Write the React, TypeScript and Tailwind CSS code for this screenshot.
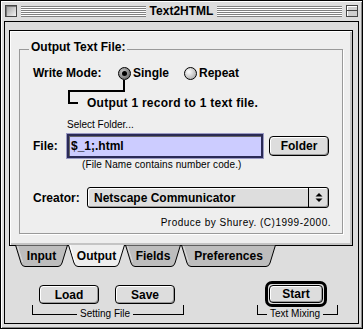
import React from 'react'

function Radio({ on }: { on?: boolean }) {
  return (
    <span
      className={
        on
          ? 'w-[13px] h-[13px] rounded-full border border-black flex items-center justify-center bg-[radial-gradient(circle_at_35%_35%,#c8c8c8,#555)]'
          : 'w-[13px] h-[13px] rounded-full border border-black flex items-center justify-center bg-[radial-gradient(circle_at_35%_35%,#ffffff,#9a9a9a)]'
      }
    >
      {on && <span className="w-[5px] h-[5px] rounded-full bg-black" />}
    </span>
  )
}

function Tab({ label, width, active }: { label: string; width: number; active?: boolean }) {
  const h = 23
  const sides = `M0.5 0 L6 ${h - 5} Q7 ${h - 1.5} 10 ${h - 1.5} L${width - 10} ${h - 1.5} Q${width - 7} ${h - 1.5} ${width - 6} ${h - 5} L${width - 0.5} 0`
  return (
    <div className="relative h-[23px] flex justify-center pt-[4px]" style={{ width }}>
      <svg className="absolute inset-0" width={width} height={h}>
        {active ? (
          <>
            <path d={sides + ' Z'} fill="#eeeeee" />
            <path d={sides} fill="none" stroke="#000" />
            <path d={`M2 0 L7 ${h - 6}`} stroke="#fff" />
          </>
        ) : (
          <>
            <path d={sides + ' Z'} fill="#bdbdbd" stroke="#000" />
            <path d={`M2.5 1 L7.5 ${h - 6}`} stroke="#dcdcdc" />
          </>
        )}
      </svg>
      <span className="relative font-bold text-[12px] leading-[14px]">{label}</span>
    </div>
  )
}

const btn =
  'rounded-[4px] border border-black bg-[#dddddd] shadow-[inset_1px_1px_0_#fff,inset_-1px_-1px_0_#999] flex items-center justify-center font-bold text-[12px] leading-[14px]'

export default function App() {
  return (
    <div className="w-[363px] h-[329px] border border-black bg-[#dddddd] flex flex-col font-['Liberation_Sans',Arial,sans-serif] text-black shadow-[inset_1px_1px_0_#fff,inset_-1px_-1px_0_#888]">
      {/* title bar */}
      <div className="h-[20px] flex items-center pl-[4px] pr-[4px]">
        <div className="w-[12px] h-[12px] border border-[#444] bg-[linear-gradient(135deg,#9a9a9a,#f4f4f4)] shadow-[inset_1px_1px_0_#777]" />
        <div className="ml-[4px] flex-1 h-[11px] bg-[repeating-linear-gradient(to_bottom,#808080_0px,#808080_1px,#ffffff_1px,#ffffff_2px)]" />
        <span className="px-[4px] font-bold text-[12px] leading-[14px]">Text2HTML</span>
        <div className="mr-[4px] flex-1 h-[11px] bg-[repeating-linear-gradient(to_bottom,#808080_0px,#808080_1px,#ffffff_1px,#ffffff_2px)]" />
        <div className="w-[12px] h-[12px] border border-[#444] bg-[#cfcfcf] shadow-[inset_1px_1px_0_#fff] flex flex-col">
          <div className="h-[5px] border-b border-[#444]" />
        </div>
      </div>

      {/* frame */}
      <div className="flex-1 px-[3px] pb-[4px] flex">
        <div className="flex-1 border border-black bg-[#dddddd] flex flex-col">
          {/* tab panel */}
          <div className="mt-[8px] ml-[4px] w-[344px] h-[216px] border border-black bg-[#eeeeee] shadow-[inset_1px_1px_0_#fff,inset_-2px_-2px_0_#c4c4c4] pt-[18px] px-[9px]">
            <div className="relative h-[185px] border border-[#999] shadow-[1px_1px_0_#fff] flex flex-col">
              <span className="absolute left-[9px] -top-[10px] px-[2px] bg-[#eeeeee] font-bold text-[12px] leading-[14px]">
                Output Text File:
              </span>

              <div className="mt-[16px] h-[14px] flex items-center pl-[13px]">
                <span className="w-[85px] font-bold text-[12px] leading-[14px]">Write Mode:</span>
                <div className="w-[66px] flex items-center gap-[2px]">
                  <Radio on />
                  <span className="font-bold text-[12px] leading-[14px]">Single</span>
                </div>
                <div className="flex items-center gap-[2px]">
                  <Radio />
                  <span className="font-bold text-[12px] leading-[14px]">Repeat</span>
                </div>
              </div>

              <div className="h-[12px] flex">
                <div className="ml-[48px] w-[57px] h-[12px] border-r-2 border-b-2 border-black" />
              </div>
              <div className="flex items-start">
                <div className="ml-[48px] w-[10px] h-[12px] border-l-2 border-b-2 border-black" />
                <span className="ml-[9px] mt-[4px] font-bold text-[12px] leading-[14px] tracking-[0.25px]">
                  Output 1 record to 1 text file.
                </span>
              </div>

              <span className="mt-[9px] ml-[47px] text-[10px] leading-[12px]">Select Folder...</span>

              <div className="mt-[3px] h-[24px] flex items-center pl-[13px]">
                <span className="w-[34px] font-bold text-[12px] leading-[14px]">File:</span>
                <div className="w-[196px] h-[24px] border-2 border-[#2a2a55] bg-[#ccccff] shadow-[inset_1px_1px_0_#666,0_0_0_1px_#9a9ac4] flex items-center pl-[2px]">
                  <span className="font-bold text-[12px] leading-[14px]">$_1;.html</span>
                </div>
                <div className={'ml-[6px] w-[60px] h-[20px] ' + btn}>Folder</div>
              </div>

              <span className="mt-[1px] ml-[62px] text-[10px] leading-[12px] tracking-[0.1px]">(File Name contains number code.)</span>

              <div className="mt-[16px] h-[21px] flex items-center pl-[13px]">
                <span className="w-[54px] font-bold text-[12px] leading-[14px]">Creator:</span>
                <div className="w-[242px] h-[21px] border border-black rounded-[3px] bg-[#dddddd] shadow-[inset_1px_1px_0_#fff,inset_-1px_-1px_0_#999] flex items-center">
                  <span className="flex-1 pl-[6px] font-bold text-[12px] leading-[14px]">Netscape Communicator</span>
                  <div className="w-[20px] h-full border-l border-black flex items-center justify-center">
                    <svg width="8" height="11" viewBox="0 0 8 11">
                      <polygon points="0.5,4.5 4,1 7.5,4.5" fill="#000" />
                      <polygon points="0.5,6.5 4,10 7.5,6.5" fill="#000" />
                    </svg>
                  </div>
                </div>
              </div>

              <span className="mt-[9px] pr-[11px] text-right text-[10px] leading-[12px] tracking-[0.5px]">
                Produce by Shurey. (C)1999-2000.
              </span>
            </div>
          </div>

          {/* tabs */}
          <div className="relative z-10 -mt-[1px] ml-[10px] h-[23px] flex">
            <Tab label="Input" width={53} />
            <Tab label="Output" width={57} active />
            <Tab label="Fields" width={56} />
            <Tab label="Preferences" width={95} />
          </div>

          {/* bottom buttons */}
          <div className="flex">
            <div className="ml-[27px] w-[152px] flex flex-col">
              <div className="h-[37px] flex items-end pl-[7px] gap-[16px] pb-[1px]">
                <div className={'w-[60px] h-[19px] ' + btn}>Load</div>
                <div className={'w-[60px] h-[19px] ' + btn}>Save</div>
              </div>
              <div className="flex items-start">
                <div className="w-[45px] h-[10px] border-l border-b border-black" />
                <span className="px-[3px] mt-[3px] text-[10px] leading-[12px]">Setting File</span>
                <div className="flex-1 h-[10px] border-r border-b border-black" />
              </div>
            </div>

            <div className="ml-[73px] w-[81px] flex flex-col">
              <div className="h-[37px] flex items-end pl-[8px]">
                <div className="-mb-[2px] rounded-[7px] border-[3px] border-black bg-[#dddddd] p-[1px]">
                  <div className={'w-[54px] h-[18px] ' + btn}>Start</div>
                </div>
              </div>
              <div className="flex items-start">
                <div className="w-[10px] h-[10px] border-l border-b border-black" />
                <span className="px-[3px] mt-[3px] text-[10px] leading-[12px]">Text Mixing</span>
                <div className="flex-1 h-[10px] border-r border-b border-black" />
              </div>
            </div>
          </div>
        </div>
      </div>
    </div>
  )
}
